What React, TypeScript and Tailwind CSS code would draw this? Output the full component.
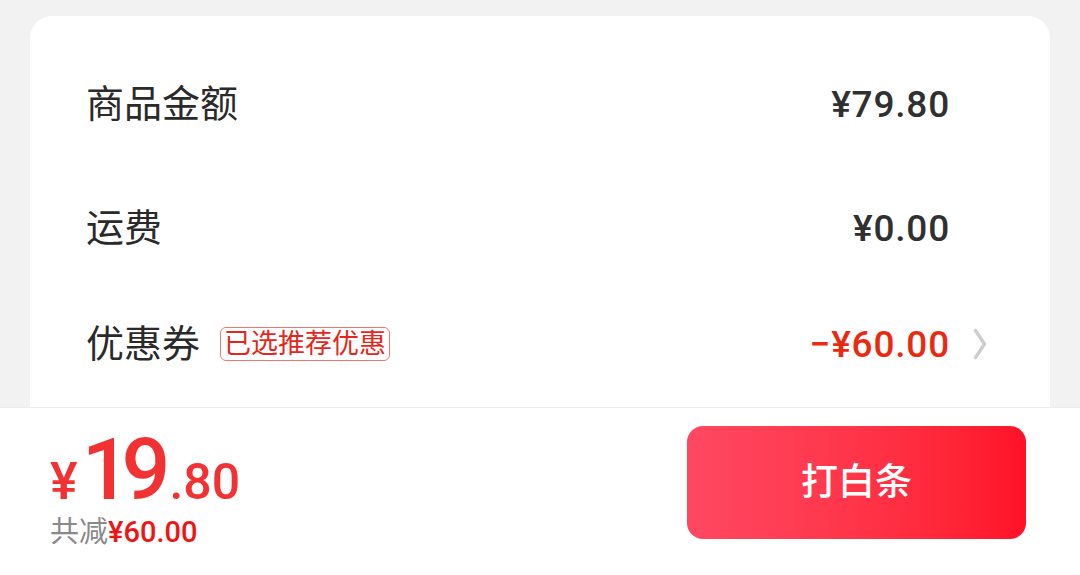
const cjk = "font-['Roboto','Noto_Sans_CJK_SC',sans-serif]";

function Chevron() {
  return (
    <svg width="14" height="32" viewBox="0 0 14 32" fill="none" className="mr-[7px]">
      <path d="M2.5 2.5 L11.5 16 L2.5 29.5" stroke="#cdcdcd" strokeWidth="3.4" strokeLinecap="round" strokeLinejoin="round" />
    </svg>
  );
}

function Row({
  label,
  value,
  height,
  red,
  tag,
  arrow,
}: {
  label: string;
  value: string;
  height: string;
  red?: boolean;
  tag?: string;
  arrow?: boolean;
}) {
  return (
    <div className={`flex items-center justify-between pl-[56px] pr-[56px] ${height}`}>
      <div className="flex items-center gap-[20px]">
        <span className="text-[38px] leading-none text-[#2a2a2a]">{label}</span>
        {tag && (
          <span className="rounded-[6px] border border-[#ea7a70] px-[3px] text-[27px] leading-[32px] text-[#e5271b]">
            {tag}
          </span>
        )}
      </div>
      <div className="flex items-center">
        <span
          className={`text-[37px] font-medium leading-none tracking-[0.8px] ${
            red ? "text-[#ea2a10]" : "text-[#303030]"
          }`}
        >
          {value}
        </span>
        <span className="flex w-[44px] justify-end">{arrow && <Chevron />}</span>
      </div>
    </div>
  );
}

export default function App() {
  return (
    <div className={`relative h-[575px] w-[1080px] overflow-hidden bg-[#f2f2f2] ${cjk}`}>
      <div className="mx-[30px] mt-4 rounded-[22px] bg-white pt-[26px] pb-10">
        <Row label="商品金额" value="¥79.80" height="h-[124px]" />
        <Row label="运费" value="¥0.00" height="h-[124px]" />
        <Row
          label="优惠券"
          value="−¥60.00"
          height="h-[108px]"
          red
          tag="已选推荐优惠"
          arrow
        />
      </div>

      <div className="absolute inset-x-0 bottom-0 flex h-[168px] items-start justify-between border-t border-[#ececec] bg-white pl-[50px] pr-[54px]">
        <div className="flex flex-col pt-[18px]">
          <div className="flex items-baseline text-[#f23232] font-medium">
            <span className="text-[52px] leading-none">¥</span>
            <span className="ml-[4px] text-[86px] leading-[88px] tracking-[-9px]">19</span>
            <span className="ml-[8px] text-[50px] leading-none">.80</span>
          </div>
          <div className="mt-[1px] flex items-baseline text-[29px] leading-[34px]">
            <span className="text-[#8a8a8a]">共减</span>
            <span className="font-medium text-[#f01414]">¥60.00</span>
          </div>
        </div>
        <button className="mt-[18px] flex h-[113px] w-[339px] items-center justify-center rounded-[16px] bg-gradient-to-r from-[#ff4862] to-[#ff1127] text-[37px] font-medium text-white">
          打白条
        </button>
      </div>
    </div>
  );
}
